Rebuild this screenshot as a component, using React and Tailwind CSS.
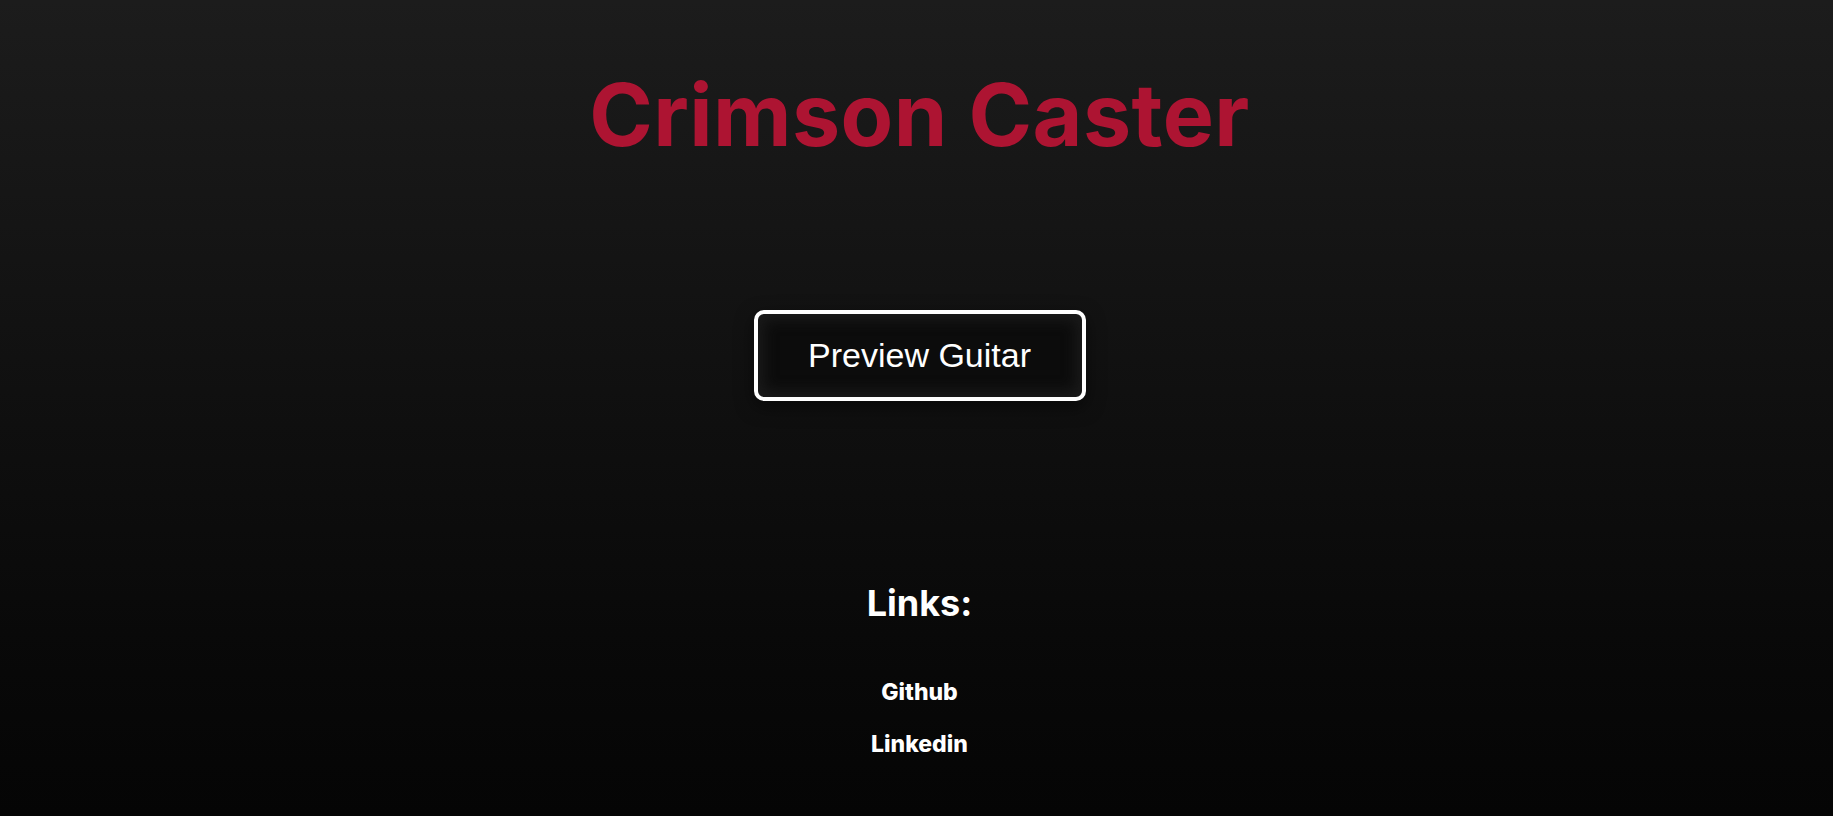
export default function App() {
  return (
    <div className="min-h-screen w-full bg-gradient-to-b from-[#1c1c1c] to-[#050505] flex flex-col items-center pl-[6px] font-['Inter',sans-serif]">
      <h1 className="pt-[72px] text-[86px] leading-none font-bold text-[#ad1432] tracking-[0.005em]">
        Crimson Caster
      </h1>

      <button
        className="mt-[152px] w-[332px] h-[91px] rounded-[10px] border-4 border-white bg-[#0c0c0c] text-white text-[34px] font-['Liberation_Sans',Arial,sans-serif] shadow-[inset_0_0_14px_6px_#1a1a1a,0_6px_18px_rgba(0,0,0,0.5)]"
      >
        Preview Guitar
      </button>

      <h2 className="mt-[184px] text-[36px] leading-none font-bold text-white">Links:</h2>

      <nav className="flex flex-col items-center">
        <a href="#" className="mt-[60px] text-[23px] leading-none font-extrabold text-white">Github</a>
        <a href="#" className="mt-[29px] text-[23px] leading-none font-extrabold text-white">Linkedin</a>
      </nav>
    </div>
  );
}
